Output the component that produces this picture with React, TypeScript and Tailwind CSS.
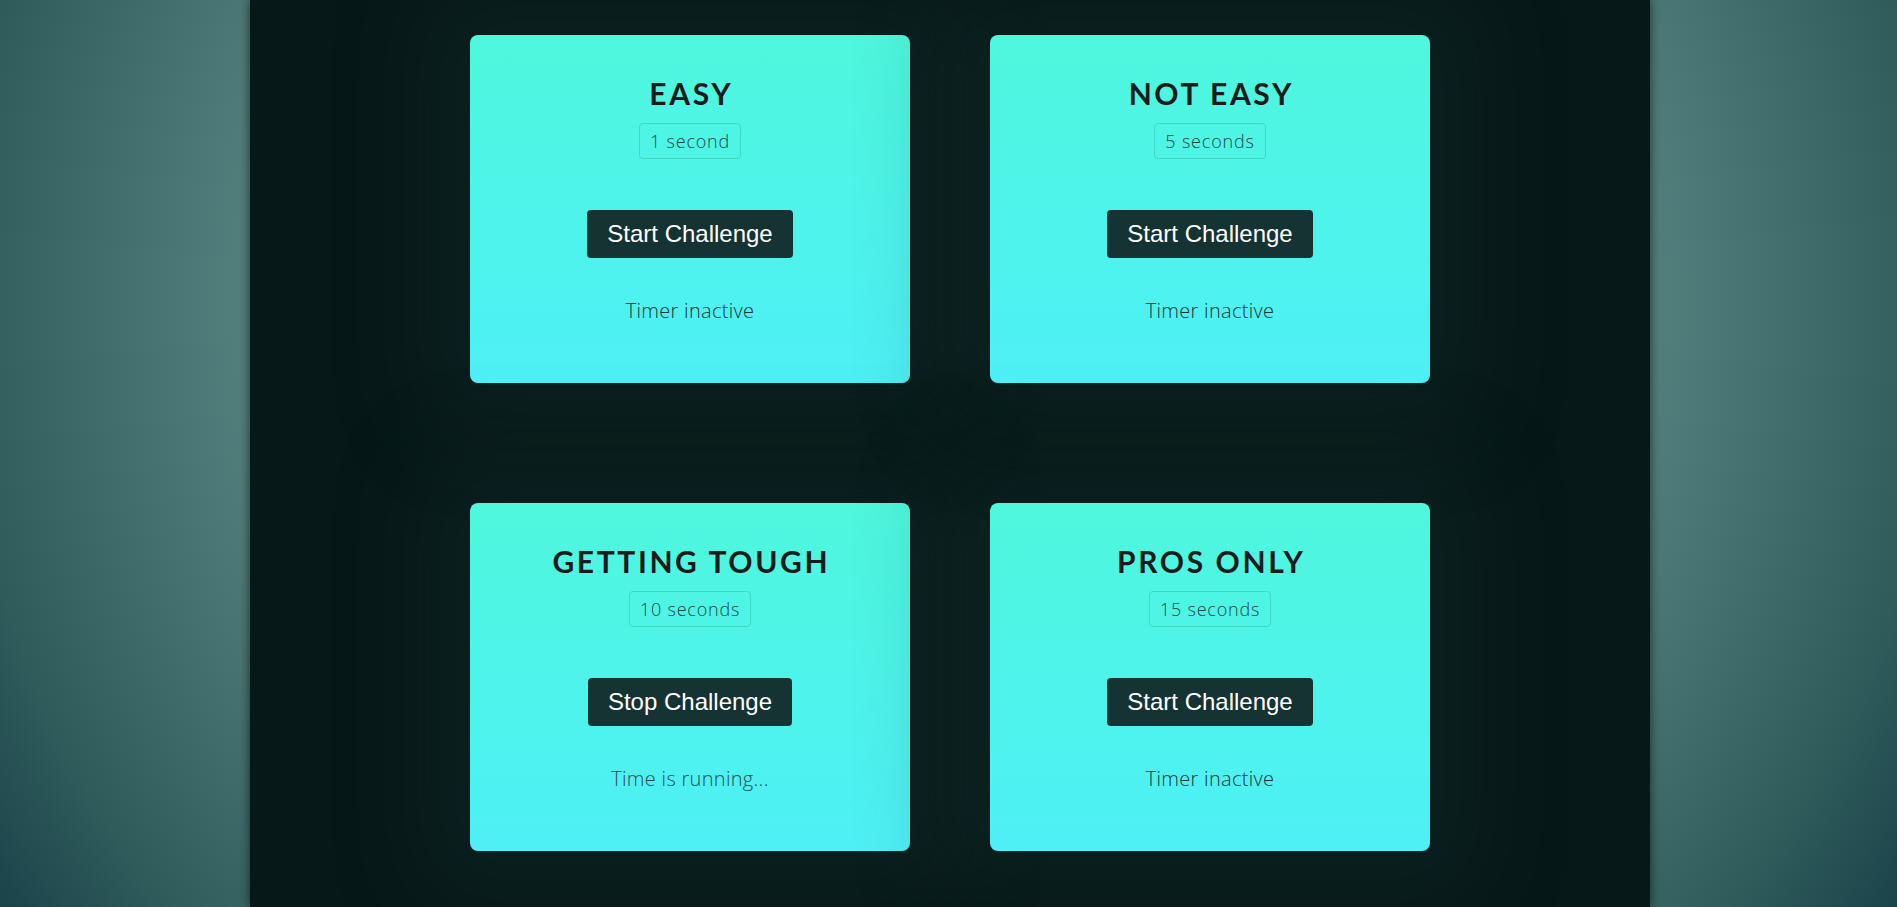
import React from "react";

type Card = { title: string; time: string; button: string; status: string; running?: boolean };

const cards: Card[] = [
  { title: "EASY", time: "1 second", button: "Start Challenge", status: "Timer inactive" },
  { title: "NOT EASY", time: "5 seconds", button: "Start Challenge", status: "Timer inactive" },
  { title: "GETTING TOUGH", time: "10 seconds", button: "Stop Challenge", status: "Time is running...", running: true },
  { title: "PROS ONLY", time: "15 seconds", button: "Start Challenge", status: "Timer inactive" },
];

function ChallengeCard({ c }: { c: Card }) {
  return (
    <div className="h-[348px] w-[440px] rounded-lg bg-gradient-to-b from-[#4ef7dd] to-[#4ef0f6] pt-[40px] flex flex-col items-center shadow-[0_0_90px_45px_rgba(22,52,48,0.3)]">
      <h2 className="font-['Lato',sans-serif] font-bold text-[30px] leading-[36px] tracking-[2.6px] text-[#1b1b1b] mr-[-2.6px]">
        {c.title}
      </h2>
      <p className="mt-[12px] h-[36px] px-[10px] py-[5px] border border-[#3dd9c6] rounded-[4px] font-['Open_Sans',sans-serif] font-light text-[18px] leading-[24px] tracking-[0.8px] text-[#1d4a4a]">
        {c.time}
      </p>
      <button className="mt-[51px] h-[48px] px-[20px] py-[10px] rounded-[4px] bg-[#153332] text-white font-['Liberation_Sans',Arial,sans-serif] text-[24px] leading-[28px]">
        {c.button}
      </button>
      <p
        className={
          c.running
            ? "mt-[39px] font-['Open_Sans',sans-serif] font-light text-[20px] leading-[28px] tracking-[0.3px] text-[#2c4d4d]"
            : "mt-[39px] font-['Open_Sans',sans-serif] font-light text-[20px] leading-[28px] tracking-[0.3px] text-[#1c3535]"
        }
      >
        {c.status}
      </p>
    </div>
  );
}

export default function App() {
  return (
    <div className="min-h-screen h-[907px] w-full overflow-hidden bg-[radial-gradient(circle_at_50%_33%,#6f9d9a_0%,#527e7c_63%,#2f5b5b_88%,#1a434a_100%)]">
      <div className="ml-[250px] h-full w-[1400px] bg-[#071819] shadow-[0_0_10px_rgba(0,0,0,0.6)] pt-[35px]">
        <div className="grid grid-cols-[440px_440px] justify-center gap-x-[80px] gap-y-[120px]">
          {cards.map((c) => (
            <ChallengeCard key={c.title} c={c} />
          ))}
        </div>
      </div>
    </div>
  );
}
